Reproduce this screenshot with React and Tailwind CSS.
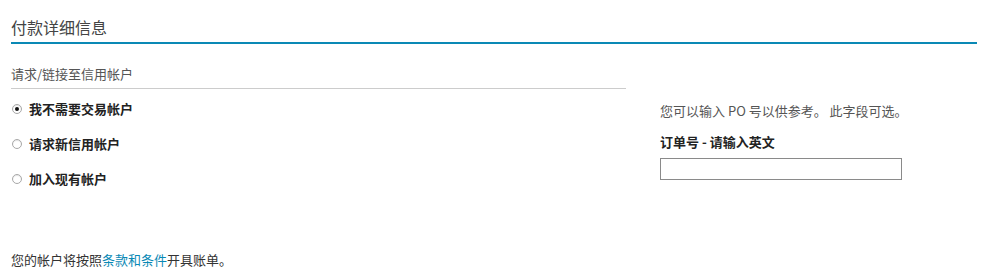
import React from "react";

const font = { fontFamily: '"Noto Sans CJK SC", "Noto Sans", sans-serif' };

function Radio({ checked, label }) {
  return (
    <label className="flex items-center h-[35px] text-[13px] font-bold text-[#222]">
      <span className="w-[10px] h-[10px] ml-[1px] mr-[7px] rounded-full border border-[#a8a8a8] bg-white flex items-center justify-center shadow-[inset_0_1px_1px_rgba(0,0,0,0.1)]">
        {checked && <span className="w-[4px] h-[4px] rounded-full bg-[#111]" />}
      </span>
      {label}
    </label>
  );
}

export default function App() {
  return (
    <div className="w-[982px] h-[280px] bg-white pl-[11px] pr-[5px] text-[#333]" style={font}>
      <div className="pt-[16px] pb-[4px] text-[16px] leading-[22px] text-[#444]">
        付款详细信息
      </div>
      <div className="h-[1.5px] bg-[#0a89b5]" />
      <div className="flex">
        <div className="w-[615px]">
          <div className="mt-[22px] pb-[6px] border-b border-b-[#cccccc] text-[13px] leading-[16px] text-[#555]">
            请求/链接至信用帐户
          </div>
          <div className="mt-[3px]">
            <Radio checked label="我不需要交易帐户" />
            <Radio label="请求新信用帐户" />
            <Radio label="加入现有帐户" />
          </div>
        </div>
        <div className="ml-[34px] pt-[59px]">
          <div className="text-[13px] leading-[16px] text-[#555] whitespace-nowrap">
            您可以输入&nbsp;PO&nbsp;号以供参考。&nbsp;此字段可选。
          </div>
          <div className="mt-[15px] text-[13px] leading-[16px] font-bold text-[#222]">
            订单号 - 请输入英文
          </div>
          <input
            type="text"
            className="mt-[8px] block w-[242px] h-[22px] border border-[#8a8a8a] outline-none px-1 text-[12px]"
          />
        </div>
      </div>
      <div className="mt-[55px] text-[13px] leading-[16px] text-[#333]">
        您的帐户将按照<span className="text-[#0a89b5]">条款和条件</span>开具账单。
      </div>
    </div>
  );
}
